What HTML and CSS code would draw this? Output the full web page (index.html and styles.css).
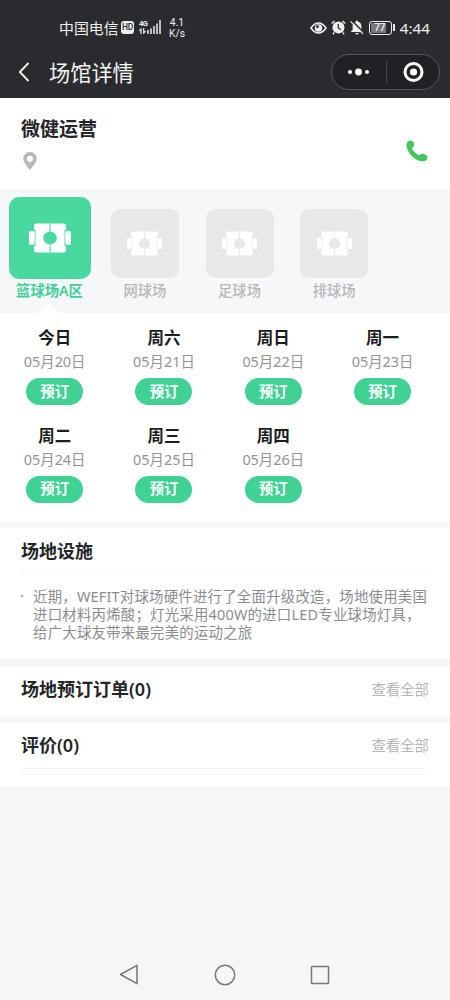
FILE: index.html
```
<!DOCTYPE html>
<html lang="zh-CN">
<head>
<meta charset="utf-8">
<title>场馆详情</title>
<link rel="stylesheet" href="styles.css">
</head>
<body>
<svg class="defs" width="0" height="0">
  <symbol id="court" viewBox="0 0 42 30">
    <path fill="currentColor" d="M7 .5h13.500v8.300a6.200 6.200 0 0 0 0 12.400v8.300H7q-2 0-2-2v-4.500h1.500V7H5V2.500q0-2 2-2zM21.600.5H35q2 0 2 2V7h-1.500v16H37v4.500q0 2-2 2H21.600v-8.300a6.200 6.200 0 0 0 0-12.400z"/>
    <rect x="0" y="8.300" width="5.700" height="13.400" rx="1.200" fill="currentColor"/>
    <rect x="36.300" y="8.300" width="5.700" height="13.400" rx="1.200" fill="currentColor"/>
  </symbol>
</svg>
<header class="top">
  <div class="status">
    <span class="carrier">中国电信</span>
    <span class="hd">HD</span>
    <span class="net"><b>4G</b>
      <svg width="7" height="6" viewBox="0 0 7 6"><path d="M2 6V1L.3 2.700M4.700 0v5l1.800-1.700" fill="none" stroke="#eee" stroke-width="1.200"/></svg>
    </span>
    <svg class="signal" width="14" height="14" viewBox="0 0 14 14"><path d="M1 14v-4M4 14V8.500M7 14V6M10 14V3.500M13 14V0" stroke="#eee" stroke-width="1.500"/></svg>
    <span class="speed">4.1<br>K/s</span>
    <div class="indicators">
      <svg width="17" height="12" viewBox="0 0 17 12"><path d="M1 6Q4.500 1 8.500 1T16 6Q12.500 11 8.500 11T1 6z" fill="none" stroke="#eee" stroke-width="1.600"/><circle cx="8.500" cy="6" r="3.700" fill="#eee"/><circle cx="7.400" cy="4.700" r="1.400" fill="#2a2b2f"/></svg>
      <svg width="15" height="15" viewBox="0 0 15 15"><circle cx="7.500" cy="7.500" r="6" fill="#eee"/><path d="M.7 3.500L3.500 1M14.300 3.500L11.500 1M3.200 12.500l-1.300 1.700M11.800 12.500l1.300 1.700" stroke="#eee" stroke-width="1.400"/><path d="M7.300 4v4l2.700 1.700" fill="none" stroke="#2a2b2f" stroke-width="1.300"/></svg>
      <svg width="14" height="15" viewBox="0 0 14 15"><path d="M7 .5q1 0 1 1.200 3.400.8 3.400 4.600v3.400L13 11.500v.6H1v-.6l1.600-1.800V6.300Q2.600 2.500 6 1.700 6 .5 7 .5zM5.300 13h3.400Q8.400 14.600 7 14.600T5.300 13z" fill="#eee"/><path d="M1.800.6L14 12.800" stroke="#2a2b2f" stroke-width="1.600"/><path d="M.5 1.300L13 13.800" stroke="#eee" stroke-width="1.200"/></svg>
      <span class="battery"><i>77</i></span>
      <span class="clock">4:44</span>
    </div>
  </div>
  <div class="titlebar">
    <svg class="back" width="12" height="20" viewBox="0 0 12 20"><path d="M10.500 1L1.800 10l8.700 9" fill="none" stroke="#f4f4f4" stroke-width="1.800"/></svg>
    <h1>场馆详情</h1>
    <div class="capsule">
      <svg width="54" height="34" viewBox="0 0 54 34"><g fill="#fff"><circle cx="18" cy="17" r="2"/><circle cx="26.500" cy="17" r="3.400"/><circle cx="35" cy="17" r="2"/></g></svg>
      <svg class="close" width="54" height="34" viewBox="0 0 54 34"><circle cx="27.500" cy="17" r="8.500" fill="none" stroke="#fff" stroke-width="3"/><circle cx="27.500" cy="17" r="3.600" fill="#fff"/></svg>
    </div>
  </div>
</header>

<section class="venue">
  <div>
    <h2>微健运营</h2>
    <svg class="pin" width="14" height="18" viewBox="0 0 14 18"><path fill="#b8b8b8" fill-rule="evenodd" d="M7 0a6.800 6.800 0 0 1 6.800 6.800Q13.800 10.500 7 18 .2 10.500.2 6.800A6.800 6.800 0 0 1 7 0zm0 3.700a3.100 3.100 0 1 0 0 6.200 3.100 3.100 0 0 0 0-6.200z"/></svg>
  </div>
  <svg class="phone" width="22" height="22" viewBox="0 0 22 22"><path fill="#43c65d" d="M.4 4Q.8 1 3.500.5 6.200.2 7.400 2L8.200 4.600Q8.300 6.800 6 8.300q1.700 4.300 6.900 7 1.400-1.700 4-1.600l2.800 1q2.200 1.200 1.700 3.500-.7 3-4.300 3.100-6.800-.2-12.300-6.400Q.2 9.500.4 4z"/></svg>
</section>

<nav class="courts">
  <div class="court active"><div class="tile"><svg><use href="#court"/></svg></div><span>篮球场A区</span></div>
  <div class="court"><div class="tile"><svg><use href="#court"/></svg></div><span>网球场</span></div>
  <div class="court"><div class="tile"><svg><use href="#court"/></svg></div><span>足球场</span></div>
  <div class="court"><div class="tile"><svg><use href="#court"/></svg></div><span>排球场</span></div>
</nav>

<section class="days">
  <div class="day"><b>今日</b><span>05月20日</span><button>预订</button></div>
  <div class="day"><b>周六</b><span>05月21日</span><button>预订</button></div>
  <div class="day"><b>周日</b><span>05月22日</span><button>预订</button></div>
  <div class="day"><b>周一</b><span>05月23日</span><button>预订</button></div>
  <div class="day"><b>周二</b><span>05月24日</span><button>预订</button></div>
  <div class="day"><b>周三</b><span>05月25日</span><button>预订</button></div>
  <div class="day"><b>周四</b><span>05月26日</span><button>预订</button></div>
</section>

<section class="card facilities">
  <div class="head"><h3>场地设施</h3></div>
  <div class="note"><i class="dot"></i><p>近期，WEFIT对球场硬件进行了全面升级改造，场地使用美国<br>进口材料丙烯酸；灯光采用400W的进口LED专业球场灯具，<br>给广大球友带来最完美的运动之旅</p></div>
</section>

<section class="card orders">
  <div class="head"><h3>场地预订订单(0)</h3><a>查看全部</a></div>
</section>

<section class="card reviews">
  <div class="head"><h3>评价(0)</h3><a>查看全部</a></div>
</section>

<footer class="sysnav">
  <svg width="20" height="22" viewBox="0 0 20 22"><path d="M18 1.300v18.400L1.500 10.500z" fill="none" stroke="#777" stroke-width="1.500" stroke-linejoin="round"/></svg>
  <svg width="22" height="22" viewBox="0 0 22 22"><circle cx="11" cy="11" r="9.700" fill="none" stroke="#777" stroke-width="1.500"/></svg>
  <svg width="20" height="22" viewBox="0 0 20 22"><rect x="1.500" y="2.500" width="17" height="17" rx=".7" fill="none" stroke="#777" stroke-width="1.500"/></svg>
</footer>
</body>
</html>
```
FILE: styles.css
```
* { box-sizing: border-box; }
body {
  margin: 0;
  width: 450px;
  height: 1000px;
  overflow: hidden;
  display: flex;
  flex-direction: column;
  background: #f6f7f9;
  color: #242528;
  font-family: "Noto Sans", "Noto Sans CJK SC", sans-serif;
}
h1, h2, h3, p { margin: 0; }
svg { display: block; flex: none; }
.defs { position: absolute; }

.top { height: 98px; flex: none; background: #2a2b2f; color: #eee; }
.status { display: flex; align-items: center; height: 44px; padding: 12px 20px 0 59px; }
.carrier { font-size: 14.900px; line-height: 20px; width: 62px; white-space: nowrap; }
.hd { width: 13px; height: 13px; margin-top: -2px; border-radius: 3px; background: #eee; color: #2a2b2f; font: 500 8.500px/13px Roboto, sans-serif; letter-spacing: -.2px; text-align: center; }
.net { width: 8px; margin-left: 5px; height: 16px; }
.net b { display: block; font: 700 7.500px/8px Roboto, sans-serif; letter-spacing: -.5px; }
.net svg { margin-top: 0; }
.signal { margin-top: -2px; }
.speed { margin-left: 7px; width: 18px; font: 10.300px/11.500px Roboto, sans-serif; text-align: center; }
.indicators { display: flex; align-items: center; gap: 4px; margin-left: auto; margin-top: -1px; }
.battery { position: relative; width: 23px; height: 14px; border: 1.500px solid #eee; border-radius: 3px; padding: 1px; margin: 0 4px 0 1px; }
.battery i { display: block; width: 15px; height: 10px; background: #77787b; font: 500 10px/10.500px Roboto, sans-serif; text-align: center; text-indent: 3px; white-space: nowrap; }
.battery::after { content: ""; position: absolute; right: -4px; top: 2px; width: 1.500px; height: 7px; background: #eee; }
.clock { font-size: 15.200px; line-height: 20px; }
.titlebar { display: flex; align-items: center; height: 54px; padding: 2px 10px 0 18px; }
.titlebar h1 { margin: 2px 0 0 19px; font-size: 21.200px; line-height: 30px; font-weight: 400; color: #f6f6f6; }
.capsule { display: flex; align-items: center; width: 109px; height: 36px; margin-left: auto; border: 1px solid #555659; border-radius: 18px; background: #202125; }
.close { background: linear-gradient(#47484b, #47484b) 0 50% / 1px 22px no-repeat; }

.venue { display: flex; justify-content: space-between; height: 91px; flex: none; padding: 17px 22px 0 21px; background: #fff; }
.venue h2 { font-size: 19px; line-height: 28px; font-weight: 600; }
.pin { margin: 9px 0 0 2px; }
.phone { margin-top: 25px; }

.courts { display: flex; height: 124px; flex: none; padding-left: 9px; gap: 27px; }
.court { display: flex; flex-direction: column; align-items: center; width: 67.700px; padding-top: 20px; color: #b7b8ba; font-size: 14.300px; line-height: 20px; font-weight: 500; white-space: nowrap; }
.court span { margin-top: 3px; }
.tile { display: flex; align-items: center; justify-content: center; width: 68px; height: 69px; border-radius: 9px; background: #e8e8e8; color: #fff; }
.tile svg { width: 35px; height: 25px; }
.court.active { position: relative; width: 81px; padding-top: 8px; margin-right: -6px; color: #43cf98; font-weight: 600; }
.active .tile { width: 82px; height: 82px; border-radius: 10px; background: #4ad8a1; }
.active .tile svg { width: 42px; height: 30px; }
.court.active span { margin-top: 2px; }
.active::after { content: ""; position: absolute; left: 30px; bottom: 0; width: 20px; height: 9px; background: #fff; clip-path: polygon(0 100%, 42% 8%, 50% 0, 58% 8%, 100% 100%); }

.days { display: grid; grid-template-columns: repeat(4, 109.300px); grid-auto-rows: 97.700px; height: 208px; flex: none; padding-top: 13px; background: #fff; }
.day { display: flex; flex-direction: column; align-items: center; }
.day b { font-size: 16.500px; line-height: 24px; font-weight: 700; color: #1b1c1e; }
.day span { margin-top: 1px; font-size: 14.400px; line-height: 22px; color: #929395; }
.day button { width: 57px; height: 27px; margin-top: 5px; padding: 0; border: 0; border-radius: 14px; background: #3fd294; color: #fff; font: 700 14.300px/26px "Noto Sans", "Noto Sans CJK SC", sans-serif; }

.card { flex: none; background: #fff; padding: 0 21px; }
.head { display: flex; align-items: center; justify-content: space-between; height: 45px; }
.head h3 { font-size: 18px; line-height: 26px; font-weight: 600; }
.head a { font-size: 14.400px; line-height: 20px; color: #b4b5b7; }
.facilities { height: 131px; margin-top: 7px; }
.facilities .head, .reviews .head { border-bottom: 1px solid #f5f6f7; }
.facilities h3 { margin-top: 2px; }
.orders h3, .reviews h3 { margin-top: -2px; }
.note { display: flex; padding-top: 14px; }
.dot { width: 2px; height: 2px; margin: 8px 10px 0 0; background: #88898b; border-radius: 1px; }
.note p { margin-top: 1px; font-size: 14.400px; line-height: 18.200px; letter-spacing: .24px; color: #8b8c8f; white-space: nowrap; }
.orders { height: 49px; margin-top: 8px; }
.reviews { height: 64px; margin-top: 7px; }
.reviews .head { height: 46px; }

.sysnav { display: flex; align-items: center; justify-content: space-between; height: 50px; margin-top: auto; padding: 0 120px 0 119px; background: #f6f6f6; }
```
